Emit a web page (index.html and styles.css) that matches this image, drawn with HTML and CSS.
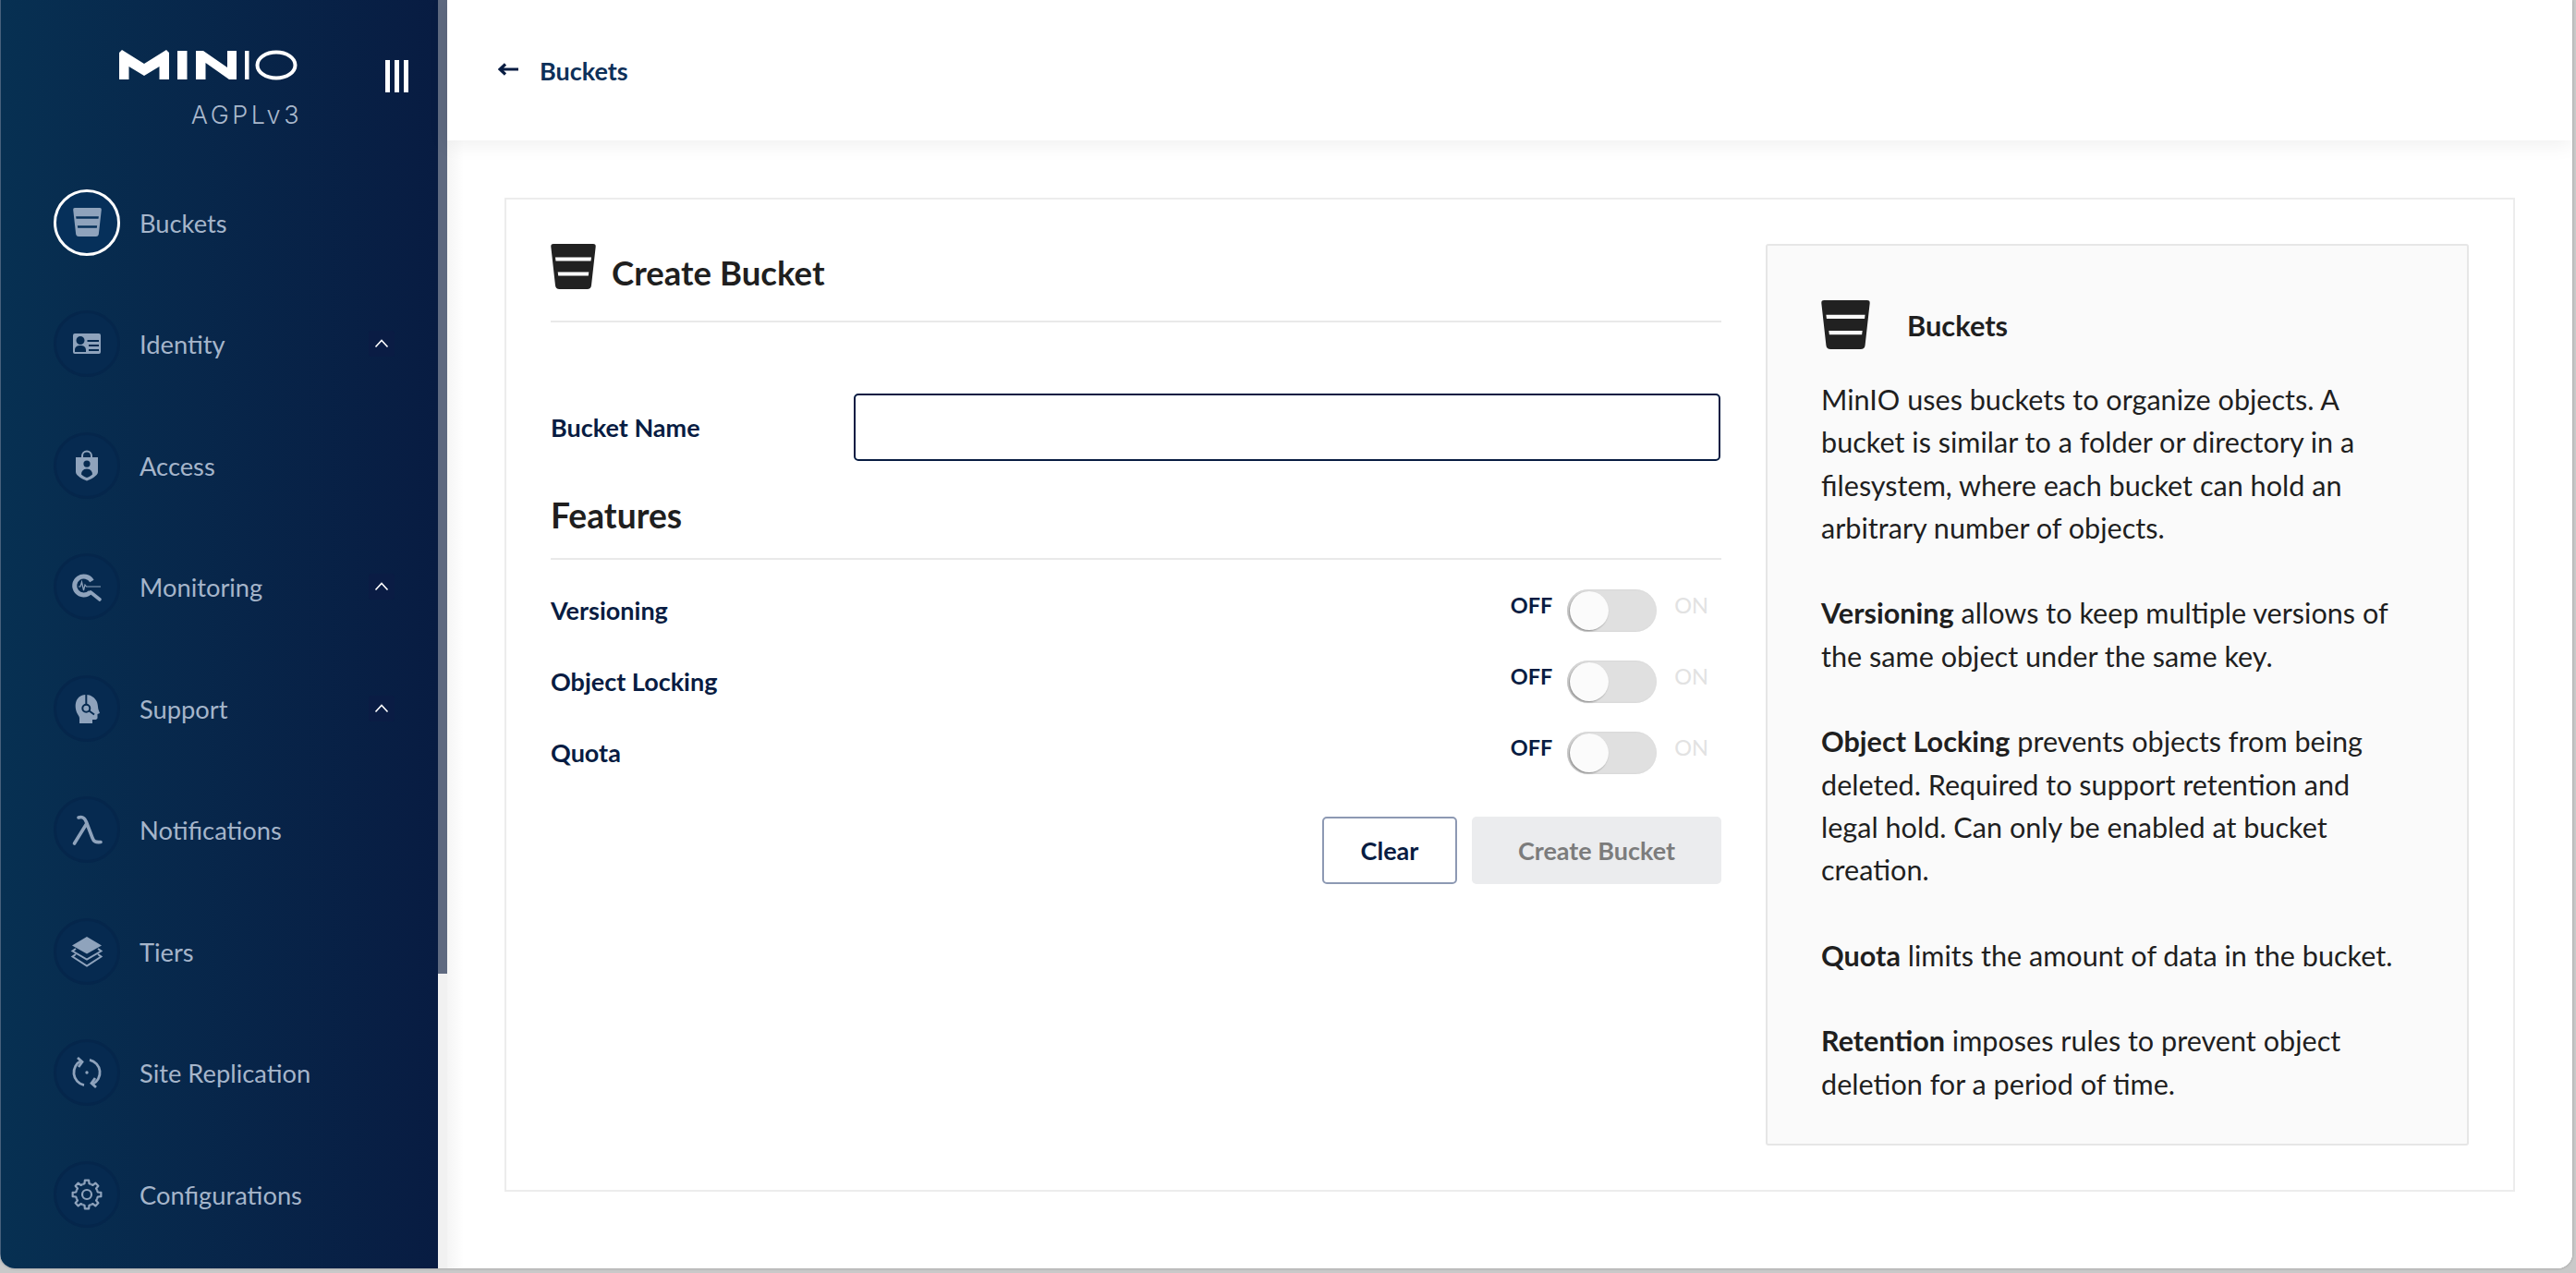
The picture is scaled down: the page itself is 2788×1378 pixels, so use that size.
FILE: index.html
```html
<!DOCTYPE html>
<html lang="en">
<head>
<meta charset="utf-8">
<title>Create Bucket</title>
<link rel="stylesheet" href="styles.css">
</head>
<body>
<svg class="defs" width="0" height="0" aria-hidden="true">
  <symbol id="bucket" viewBox="0 0 49 49">
    <path fill-rule="evenodd" d="M3 0H46Q49 0 48.7 3L44 45Q43.5 49 39.5 49H9.5Q5.5 49 5 45L.3 3Q0 0 3 0ZM5 14.5L5.5 18.5H43.5L44 14.5ZM7.7 30.5L8.2 34.5H40.8L41.3 30.5Z"/>
  </symbol>
  <symbol id="chev" viewBox="0 0 28 28">
    <path d="M7.5 17.5L14 10.5L20.5 17.5" fill="none" stroke="#fff" stroke-width="1.6"/>
  </symbol>
</svg>
<div class="window">
  <aside class="sidebar">
    <div class="brand">
      <div class="logo">
        <svg class="wordmark" width="194" height="33" viewBox="0 0 194 33" fill="#fff" role="img" aria-label="MinIO">
          <path d="M0 3L3 0L27 15L51 0L54 3V32H43.5V18L27 28L10.5 18V32H0Z"/>
          <rect x="63" y="1" width="10.5" height="31"/>
          <path d="M83 1H91L117 19V1H127V32H119L93.5 14V32H83Z"/>
          <rect x="136" y="1" width="4.5" height="31"/>
          <ellipse cx="170" cy="16.5" rx="20.5" ry="14" fill="none" stroke="#fff" stroke-width="4"/>
        </svg>
        <div class="edition">AGPLv3</div>
      </div>
      <div class="collapse"><i></i><i></i><i></i></div>
    </div>
    <nav class="nav">
      <a class="item">
        <span class="disc active"><svg class="ic" width="31" height="31"><use href="#bucket"/></svg></span>
        <span class="label">Buckets</span>
      </a>
      <a class="item">
        <span class="disc"><svg class="ic" width="36" height="36" viewBox="0 0 36 36"><path fill-rule="evenodd" d="M5 7H31Q33 7 33 9V27Q33 29 31 29H5Q3 29 3 27V9Q3 7 5 7ZM18.5 14V16H31V14ZM20 19V21H31V19ZM20 24V26H31V24ZM5 27H17V25C17 21 14 20 11 20C8 20 5 21 5 25ZM11 10A4.5 4.5 0 1 0 11 19A4.5 4.5 0 1 0 11 10Z"/></svg></span>
        <span class="label">Identity</span>
        <svg class="chev" width="28" height="28"><use href="#chev"/></svg>
      </a>
      <a class="item">
        <span class="disc"><svg class="ic" width="36" height="36" viewBox="0 0 36 36"><path d="M13 9V7.5A5 5 0 0 1 23 7.5V9" fill="none" stroke="currentColor" stroke-width="2"/><path fill-rule="evenodd" d="M6 9H30V25C30 29 22 33 18 34.5C14 33 6 29 6 25ZM18 12.5A3.6 3.6 0 1 0 18 19.7A3.6 3.6 0 1 0 18 12.5ZM12 27.5C14 29.5 16 30.5 18 31C20 30.5 22 29.5 24 27.5C24 23.5 21 21.5 18 21.5C15 21.5 12 23.5 12 27.5Z"/></svg></span>
        <span class="label">Access</span>
      </a>
      <a class="item">
        <span class="disc"><svg class="ic" width="36" height="36" viewBox="0 0 36 36"><path d="M23.4 12A10 10 0 1 0 21.8 24" fill="none" stroke="currentColor" stroke-width="5"/><path d="M22 24L32 32" fill="none" stroke="currentColor" stroke-width="3.6" stroke-linecap="round"/><path d="M9 18H11L12.5 13L14.5 22L16 16L17.5 18H33" fill="none" stroke="currentColor" stroke-width="1.2"/></svg></span>
        <span class="label">Monitoring</span>
        <svg class="chev" width="28" height="28"><use href="#chev"/></svg>
      </a>
      <a class="item">
        <span class="disc"><svg class="ic" width="36" height="36" viewBox="0 0 36 36"><path d="M8 24C5 19 5 12 7.5 8C10 4 14 3 17.5 3C22 3 27 6 29 11C30 14 30 17 30.5 19L32 23L29.5 24V28C29.5 29.5 28 30 26.5 30H24V34H10V28.500C10 27 9 25.500 8 24Z"/><g class="cut"><path d="M17.300 2V13.700"/><circle cx="17.300" cy="17.700" r="4"/><path d="M20.500 20.500L26 24.500"/></g></svg></span>
        <span class="label">Support</span>
        <svg class="chev" width="28" height="28"><use href="#chev"/></svg>
      </a>
      <a class="item">
        <span class="disc"><svg class="ic" width="36" height="36" viewBox="0 0 36 36"><path d="M9 5C14 3.5 16 6 17.5 10L24 27C25.5 31 27 32 33 31.5M17.5 12L4.5 33" fill="none" stroke="currentColor" stroke-width="3.6" stroke-linecap="round"/></svg></span>
        <span class="label">Notifications</span>
      </a>
      <a class="item">
        <span class="disc"><svg class="ic" width="36" height="36" viewBox="0 0 36 36"><path d="M18 2L34 11.5L18 20.5L2 11.5Z"/><path d="M6 15L2.5 17.5L18 26.5L33.5 17.5L30 15M6 21L2.5 23.5L18 33.5L33.5 23.5L30 21" fill="none" stroke="currentColor" stroke-width="2"/></svg></span>
        <span class="label">Tiers</span>
      </a>
      <a class="item">
        <span class="disc"><svg class="ic" width="36" height="36" viewBox="0 0 36 36"><g fill="none" stroke="currentColor" stroke-width="2.8"><path d="M12 5.3A14 14 0 0 0 15 31.7"/><path d="M24 30.7A14 14 0 0 0 21 4.3"/><path d="M8 2L13 6.5L9 12"/><path d="M28 34L23 29.5L27 24"/></g><circle cx="18" cy="18" r="1.7"/></svg></span>
        <span class="label">Site Replication</span>
      </a>
      <a class="item">
        <span class="disc"><svg class="ic" width="36" height="36" viewBox="0 0 36 36"><g fill="none" stroke="currentColor" stroke-width="2.2" stroke-linejoin="round"><g id="tooth"><path d="M13.41 6.91L15.51 6.26L15.84 2.65H20.16L20.49 6.26L22.59 6.91"/></g><use href="#tooth" transform="rotate(45 18 18)"/><use href="#tooth" transform="rotate(90 18 18)"/><use href="#tooth" transform="rotate(135 18 18)"/><use href="#tooth" transform="rotate(180 18 18)"/><use href="#tooth" transform="rotate(225 18 18)"/><use href="#tooth" transform="rotate(270 18 18)"/><use href="#tooth" transform="rotate(315 18 18)"/><circle cx="18" cy="18" r="5"/></g></svg></span>
        <span class="label">Configurations</span>
      </a>
    </nav>
  </aside>
  <div class="gutter"><div class="thumb"></div></div>
  <main class="main">
    <header class="topbar">
      <svg class="back" width="22" height="14" viewBox="0 0 22 14"><path d="M22 7H3M8 1.5L2 7L8 12.5" fill="none" stroke="#081c42" stroke-width="3.2"/></svg>
      <span class="crumb">Buckets</span>
    </header>
    <section class="content">
      <div class="panel">
        <form class="form">
          <div class="title-row">
            <svg class="bucket-dark" width="49" height="49"><use href="#bucket"/></svg>
            <h1 class="title">Create Bucket</h1>
          </div>
          <div class="field">
            <label class="field-label" for="bn">Bucket Name</label>
            <input class="input" id="bn" type="text">
          </div>
          <h2 class="section">Features</h2>
          <div class="rows">
            <div class="row">
              <span class="row-label">Versioning</span>
              <div class="switch"><span class="off">OFF</span><span class="track"><span class="knob"></span></span><span class="on">ON</span></div>
            </div>
            <div class="row">
              <span class="row-label">Object Locking</span>
              <div class="switch"><span class="off">OFF</span><span class="track"><span class="knob"></span></span><span class="on">ON</span></div>
            </div>
            <div class="row">
              <span class="row-label">Quota</span>
              <div class="switch"><span class="off">OFF</span><span class="track"><span class="knob"></span></span><span class="on">ON</span></div>
            </div>
          </div>
          <div class="actions">
            <button class="btn btn-clear" type="button">Clear</button>
            <button class="btn btn-create" type="button">Create Bucket</button>
          </div>
        </form>
        <div class="help">
          <div class="help-head">
            <svg class="bucket-dark" width="53" height="53"><use href="#bucket"/></svg>
            <span class="help-title">Buckets</span>
          </div>
          <p class="help-p">MinIO uses buckets to organize objects. A<br>bucket is similar to a folder or directory in a filesystem, where each bucket can hold an arbitrary number of objects.</p>
          <p class="help-p"><b>Versioning</b> allows to keep multiple versions of the same object under the same key.</p>
          <p class="help-p"><b>Object Locking</b> prevents objects from being deleted. Required to support retention and legal hold. Can only be enabled at bucket creation.</p>
          <p class="help-p"><b>Quota</b> limits the amount of data in the bucket.</p>
          <p class="help-p"><b>Retention</b> imposes rules to prevent object deletion for a period of time.</p>
        </div>
      </div>
    </section>
  </main>
</div>
</body>
</html>
```
FILE: styles.css
```css
* { box-sizing: border-box; }
html, body { margin: 0; height: 100%; }
body {
  width: 2788px;
  height: 1378px;
  overflow: hidden;
  background: #c9c9c9;
  font-family: "Lato", "Liberation Sans", sans-serif;
}
.defs { display: block; height: 0; }
.window {
  display: flex;
  width: 2784px;
  height: 1373px;
  background: #fff;
  border-radius: 0 0 16px 16px;
  overflow: hidden;
  box-shadow: 0 0 3px #8f8f8f;
}
.sidebar {
  width: 474px;
  flex: none;
  background: linear-gradient(90deg, #073052 0%, #081c42 100%);
  border-left: 1px solid #47607c;
}
.brand { display: flex; height: 175px; padding-left: 128px; }
.logo { display: flex; flex-direction: column; width: 194px; padding-top: 54px; }
.wordmark { display: block; flex: none; }
.edition {
  margin: 23px -4px 0 -2px;
  text-align: right;
  color: #a9b8cc;
  font-family: "Inter", sans-serif;
  font-weight: 300;
  font-size: 27px;
  line-height: 30px;
  letter-spacing: 3.5px;
}
.collapse { display: flex; gap: 5px; margin: 65px 0 0 94px; height: 35px; }
.collapse i { display: block; width: 5px; background: #fff; }
.item { display: flex; align-items: center; height: 131.5px; padding-left: 57px; }
.disc {
  display: flex;
  align-items: center;
  justify-content: center;
  flex: none;
  width: 72px;
  height: 72px;
  margin-right: 21px;
  border-radius: 50%;
  background: #062a50;
  border: 3px solid #05264b;
  color: #8fa3bc;
  fill: currentColor;
}
.disc.active { background: #06305a; border-color: #fff; }
.ic { display: block; fill: currentColor; }
.cut { fill: none; stroke: #062a50; stroke-width: 2; }
.label { flex: 1; padding-top: 2px; color: #a5b5ca; font-size: 27.3px; line-height: 36px; }
.chev { flex: none; margin-right: 47px; background: #0a1c44; border-radius: 3px; }
.gutter { flex: none; width: 10px; background: #f1f1f1; }
.thumb { height: 1054px; background: #5f6a80; }
.main { flex: 1; min-width: 0; display: flex; flex-direction: column; }
.topbar {
  position: relative;
  display: flex;
  align-items: center;
  height: 152px;
  padding-left: 55px;
  background: #fff;
  box-shadow: 0 3px 22px rgba(0, 0, 0, .07);
}
.back { flex: none; margin: -2px 23px 0 0; }
.crumb { color: #0d3059; font-weight: 700; font-size: 27px; }
.content { flex: 1; padding: 62px 62px 0; background: linear-gradient(90deg, #f5f5f5 0, #fff 18px); }
.panel {
  display: flex;
  height: 1076px;
  padding: 48px 0 0 48px;
  background: #fff;
  border: 2px solid #ececec;
}
.form { flex: none; width: 1267px; margin-right: 48px; }
.title-row {
  display: flex;
  align-items: flex-end;
  gap: 17px;
  height: 85px;
  padding-bottom: 34px;
  border-bottom: 2px solid #e9e9e9;
}
.bucket-dark { display: block; flex: none; fill: #212121; }
.title { margin: 0; color: #1f1f1f; font-size: 36.6px; line-height: 36px; font-weight: 700; }
.field { display: flex; align-items: center; margin-top: 77px; height: 73px; }
.field-label { width: 328px; flex: none; color: #081c42; font-weight: 700; font-size: 27px; }
.input {
  flex: none;
  width: 938px;
  height: 73px;
  background: #fff;
  border: 2px solid #081c42;
  border-radius: 5px;
  outline: 0;
}
.section {
  margin: 41px 0 0;
  padding-bottom: 28px;
  color: #1f1f1f;
  font-size: 37.2px;
  line-height: 36px;
  font-weight: 700;
  border-bottom: 2px solid #e9e9e9;
}
.rows { margin-top: 16px; }
.row { display: flex; align-items: center; justify-content: space-between; height: 77px; padding-right: 14px; }
.row-label { color: #081c42; font-weight: 700; font-size: 27px; }
.switch { display: flex; align-items: center; }
.off, .on { font-size: 23.5px; line-height: 28px; margin-bottom: 12px; }
.off { color: #081c42; font-weight: 700; margin-right: 16px; }
.on { color: #e2e2e2; margin-left: 19px; }
.track { display: block; width: 97px; height: 46px; padding: 2px 0 0 3px; border-radius: 23px; background: #e0e0e0; box-shadow: inset 1px 0 2px #c9c9c9; }
.knob { display: block; width: 42px; height: 42px; border-radius: 50%; background: #fbfbfb; box-shadow: -1px 1px 2px rgba(0,0,0,.4); }
.actions { display: flex; justify-content: flex-end; gap: 16px; margin-top: 31px; }
.btn {
  height: 73px;
  border-radius: 5px;
  font-family: inherit;
  font-weight: 700;
  font-size: 27px;
  padding: 0;
}
.btn-clear { width: 146px; background: #fff; border: 2px solid #8d99b3; color: #081c42; }
.btn-create { width: 270px; background: #ebecee; border: 0; color: #7c7c7c; }
.help {
  flex: none;
  width: 761px;
  height: 976px;
  padding: 59px 60px 0 58px;
  background: #fafafa;
  border: 2px solid #e6e6e6;
  border-radius: 3px;
}
.help-head { display: flex; align-items: center; gap: 40px; margin-bottom: 32px; }
.help-title { padding-top: 2px; color: #1f1f1f; font-weight: 700; font-size: 30.8px; }
.help-p { margin: 0 0 46.3px; color: #1f1f1f; font-size: 30.6px; line-height: 46.3px; }
.help-p b { font-weight: 700; }
```
